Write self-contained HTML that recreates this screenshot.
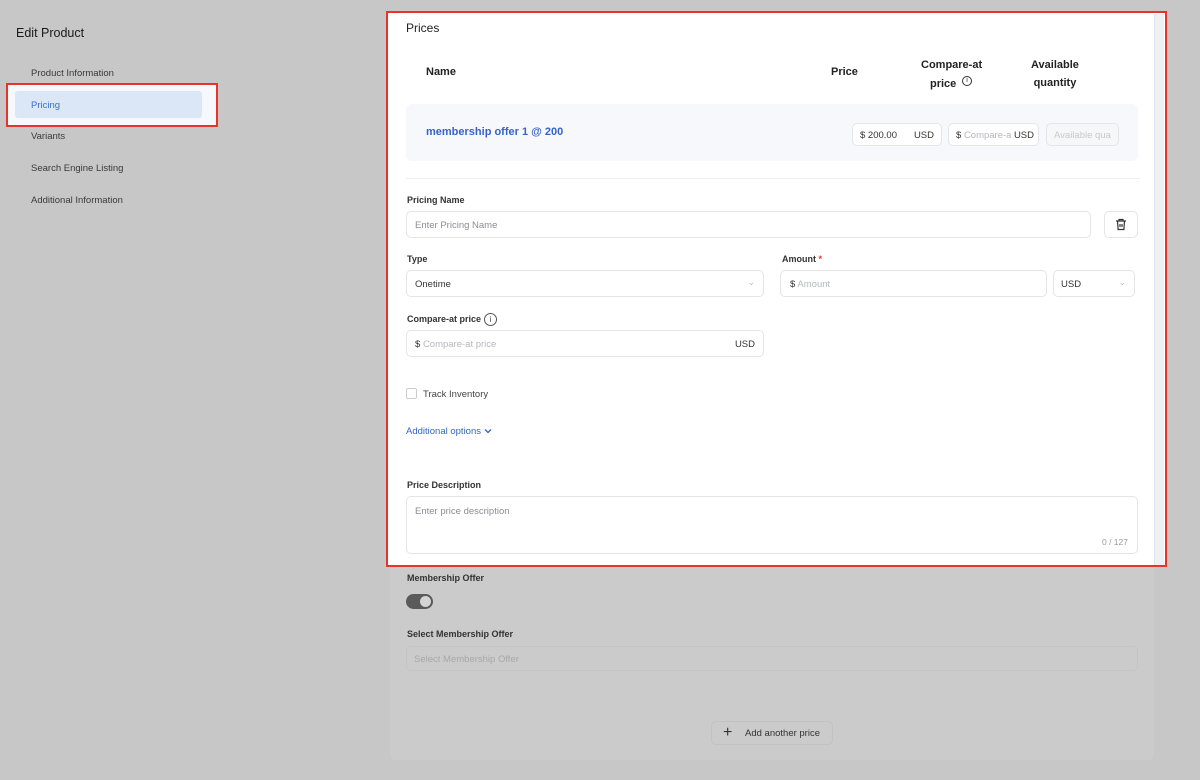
<!DOCTYPE html>
<html><head><meta charset="utf-8"><style>
*{box-sizing:border-box;margin:0;padding:0}
body{width:1200px;height:780px;background:#c7c7c7;font-family:"Liberation Sans",sans-serif;position:relative;overflow:hidden;color:#222}
.a{position:absolute}
.nav{font-size:9.5px;color:#3a3a3a}
.lbl{font-size:9px;color:#333;font-weight:bold}
.inp{position:absolute;background:#fff;border:1px solid #e3e5e8;border-radius:5px;font-size:9.5px;color:#888}
.ph{color:#b5b8bd}
</style></head><body>
<div class="a" style="left:16px;top:26px;font-size:12.5px;color:#1a1a1a">Edit Product</div>
<div class="a nav" style="left:31px;top:68px">Product Information</div>
<div class="a" style="left:6px;top:83px;width:212px;height:44px;border:2.5px solid #e8322a;background:#f5f8fc"></div>
<div class="a" style="left:15px;top:91px;width:187px;height:27px;background:#dbe6f7;border-radius:3px"></div>
<div class="a nav" style="left:31px;top:100px;color:#3d6fd6">Pricing</div>
<div class="a nav" style="left:31px;top:131px">Variants</div>
<div class="a nav" style="left:31px;top:163px">Search Engine Listing</div>
<div class="a nav" style="left:31px;top:195px">Additional Information</div>

<div class="a" style="left:390px;top:10px;width:764px;height:750px;background:#cbcbcb;border-radius:6px"></div>
<div class="a lbl" style="left:407px;top:573px">Membership Offer</div>
<div class="a" style="left:406px;top:594px;width:27px;height:15px;border-radius:8px;background:#5a5a5a"></div>
<div class="a" style="left:420px;top:596px;width:11px;height:11px;border-radius:50%;background:#d4d4d4"></div>
<div class="a lbl" style="left:407px;top:629px">Select Membership Offer</div>
<div class="a" style="left:406px;top:646px;width:732px;height:25px;border:1px solid #c4c4c4;border-radius:5px;font-size:9.5px;color:#a8a8a8;padding:7px 7px">Select Membership Offer</div>
<div class="a" style="left:711px;top:721px;width:122px;height:24px;border:1px solid #c2c2c2;border-radius:5px;font-size:9.5px;color:#333;padding:6px 0 0 33px">Add another price</div>
<div class="a" style="left:723px;top:726px;font-size:16px;line-height:13px;color:#333">+</div>

<div class="a" style="left:386px;top:11px;width:781px;height:556px;border:2.5px solid #e8322a;background:#fff"></div>
<div class="a" style="left:1154px;top:14px;width:10px;height:551px;background:#eef0f3;border-left:1px solid #e2e4e7"></div>
<div class="a" style="left:406px;top:21px;font-size:12px;color:#222">Prices</div>
<div class="a" style="left:426px;top:66px;font-size:11px;font-weight:bold">Name</div>
<div class="a" style="left:831px;top:66px;font-size:11px;font-weight:bold">Price</div>
<div class="a" style="left:921px;top:56px;font-size:11px;font-weight:bold;line-height:19px">Compare-at</div>
<div class="a" style="left:930px;top:75px;font-size:11px;font-weight:bold;line-height:19px">price</div>
<div class="a" style="left:962px;top:76px;width:10px;height:10px;border:1px solid #333;border-radius:50%;font-size:7px;text-align:center;line-height:8px">i</div>
<div class="a" style="left:1031px;top:56px;font-size:11px;font-weight:bold;text-align:center;line-height:18px">Available<br>quantity</div>
<div class="a" style="left:406px;top:104px;width:732px;height:57px;background:#f6f8fb;border-radius:6px"></div>
<div class="a" style="left:426px;top:126px;font-size:11px;color:#3563c8;font-weight:bold">membership offer 1 @ 200</div>
<div class="inp" style="left:852px;top:123px;width:90px;height:23px;padding:6px 7px;color:#333">$ 200.00<span style="float:right">USD</span></div>
<div class="inp" style="left:948px;top:123px;width:91px;height:23px;padding:6px 7px;color:#333">$ <span class="ph">Compare-a</span><span style="float:right;margin-right:-3px">USD</span></div>
<div class="inp" style="left:1046px;top:123px;width:73px;height:23px;padding:6px 7px;background:#f6f7f9;color:#c6c8cc;overflow:hidden;white-space:nowrap">Available qua</div>
<div class="a" style="left:406px;top:178px;width:734px;height:1px;background:#eceef1"></div>

<div class="a lbl" style="left:407px;top:195px">Pricing Name</div>
<div class="inp" style="left:406px;top:211px;width:685px;height:27px;padding:8px 8px"><span style="color:#8a8d92">Enter Pricing Name</span></div>
<div class="inp" style="left:1104px;top:211px;width:34px;height:27px"><svg width="12" height="13" viewBox="0 0 12 13" style="position:absolute;left:10px;top:6px" fill="none" stroke="#333" stroke-width="1.2"><path d="M1 3h10M4 3V1.5h4V3M2.5 3l.6 8.5h5.8L9.5 3M5 6v3M7 6v3"/></svg></div>
<div class="a lbl" style="left:407px;top:254px">Type</div>
<div class="inp" style="left:406px;top:270px;width:358px;height:27px;padding:8px 8px;color:#333">Onetime<span style="position:absolute;right:8px;top:6px;color:#bbb;font-size:9px">&#8964;</span></div>
<div class="a lbl" style="left:782px;top:254px">Amount <span style="color:#e33">*</span></div>
<div class="inp" style="left:780px;top:270px;width:267px;height:27px;padding:8px 9px;color:#333">$ <span class="ph">Amount</span></div>
<div class="inp" style="left:1053px;top:270px;width:82px;height:27px;padding:8px 7px;color:#333">USD<span style="position:absolute;right:8px;top:6px;color:#bbb;font-size:9px">&#8964;</span></div>
<div class="a lbl" style="left:407px;top:314px">Compare-at price</div>
<div class="a" style="left:484px;top:313px;width:13px;height:13px;border:1px solid #555;border-radius:50%;font-size:8px;text-align:center;line-height:11px;color:#444">i</div>
<div class="inp" style="left:406px;top:330px;width:358px;height:27px;padding:8px 8px;color:#333">$ <span class="ph">Compare-at price</span><span style="float:right">USD</span></div>
<div class="a" style="left:406px;top:388px;width:11px;height:11px;border:1px solid #ccc;border-radius:2px"></div>
<div class="a" style="left:423px;top:389px;font-size:9.5px;color:#444">Track Inventory</div>
<div class="a" style="left:406px;top:426px;font-size:9.5px;color:#3563c8">Additional options <svg width="8" height="6" viewBox="0 0 8 6"><path d="M1 1.5l3 3 3-3" stroke="#3563c8" stroke-width="1.3" fill="none"/></svg></div>
<div class="a lbl" style="left:407px;top:480px">Price Description</div>
<div class="inp" style="left:406px;top:496px;width:732px;height:58px;padding:9px 8px"><span style="color:#8a8d92">Enter price description</span><span style="position:absolute;right:9px;bottom:6px;font-size:8.5px;color:#999">0 / 127</span></div>
</body></html>
